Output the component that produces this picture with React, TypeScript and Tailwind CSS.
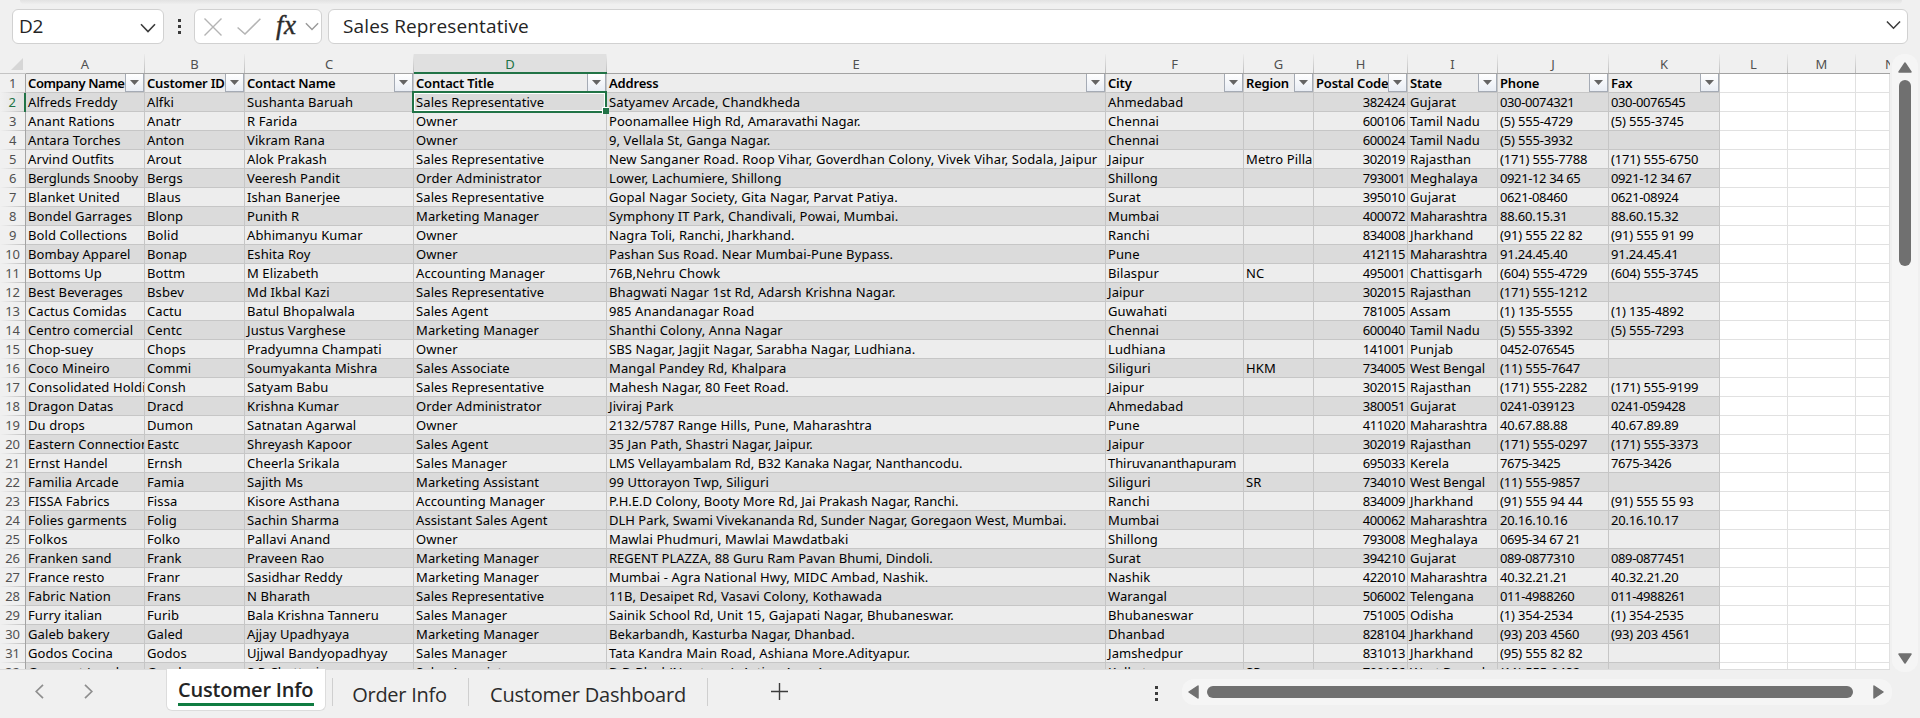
import React from "react";
import clsx from "clsx";

type Col = { letter: string; width: string; title?: string };

const COLS: Col[] = [
  { letter: "A", width: "w-[119px]", title: "Company Name" },
  { letter: "B", width: "w-[100px]", title: "Customer ID" },
  { letter: "C", width: "w-[169px]", title: "Contact Name" },
  { letter: "D", width: "w-[193px]", title: "Contact Title" },
  { letter: "E", width: "w-[499px]", title: "Address" },
  { letter: "F", width: "w-[138px]", title: "City" },
  { letter: "G", width: "w-[70px]", title: "Region" },
  { letter: "H", width: "w-[94px]", title: "Postal Code" },
  { letter: "I", width: "w-[90px]", title: "State" },
  { letter: "J", width: "w-[111px]", title: "Phone" },
  { letter: "K", width: "w-[111px]", title: "Fax" },
  { letter: "L", width: "w-[68px]" },
  { letter: "M", width: "w-[68px]" },
  { letter: "N", width: "w-[34px]" },
];

const ROWS: string[] = [
  "Alfreds Freddy|Alfki|Sushanta Baruah|Sales Representative|Satyamev Arcade, Chandkheda|Ahmedabad||382424|Gujarat|030-0074321|030-0076545",
  "Anant Rations|Anatr|R Farida|Owner|Poonamallee High Rd, Amaravathi Nagar.|Chennai||600106|Tamil Nadu|(5) 555-4729|(5) 555-3745",
  "Antara Torches|Anton|Vikram Rana|Owner|9, Vellala St, Ganga Nagar.|Chennai||600024|Tamil Nadu|(5) 555-3932|",
  "Arvind Outfits|Arout|Alok Prakash|Sales Representative|New Sanganer Road. Roop Vihar, Goverdhan Colony, Vivek Vihar, Sodala, Jaipur|Jaipur|Metro Pillar|302019|Rajasthan|(171) 555-7788|(171) 555-6750",
  "Berglunds Snooby|Bergs|Veeresh Pandit|Order Administrator|Lower, Lachumiere, Shillong|Shillong||793001|Meghalaya|0921-12 34 65|0921-12 34 67",
  "Blanket United|Blaus|Ishan Banerjee|Sales Representative|Gopal Nagar Society, Gita Nagar, Parvat Patiya.|Surat||395010|Gujarat|0621-08460|0621-08924",
  "Bondel Garrages|Blonp|Punith R|Marketing Manager|Symphony IT Park, Chandivali, Powai, Mumbai.|Mumbai||400072|Maharashtra|88.60.15.31|88.60.15.32",
  "Bold Collections|Bolid|Abhimanyu Kumar|Owner|Nagra Toli, Ranchi, Jharkhand.|Ranchi||834008|Jharkhand|(91) 555 22 82|(91) 555 91 99",
  "Bombay Apparel|Bonap|Eshita Roy|Owner|Pashan Sus Road. Near Mumbai-Pune Bypass.|Pune||412115|Maharashtra|91.24.45.40|91.24.45.41",
  "Bottoms Up|Bottm|M Elizabeth|Accounting Manager|76B,Nehru Chowk|Bilaspur|NC|495001|Chattisgarh|(604) 555-4729|(604) 555-3745",
  "Best Beverages|Bsbev|Md Ikbal Kazi|Sales Representative|Bhagwati Nagar 1st Rd, Adarsh Krishna Nagar.|Jaipur||302015|Rajasthan|(171) 555-1212|",
  "Cactus Comidas|Cactu|Batul Bhopalwala|Sales Agent|985 Anandanagar Road|Guwahati||781005|Assam|(1) 135-5555|(1) 135-4892",
  "Centro comercial|Centc|Justus Varghese|Marketing Manager|Shanthi Colony, Anna Nagar|Chennai||600040|Tamil Nadu|(5) 555-3392|(5) 555-7293",
  "Chop-suey|Chops|Pradyumna Champati|Owner|SBS Nagar, Jagjit Nagar, Sarabha Nagar, Ludhiana.|Ludhiana||141001|Punjab|0452-076545|",
  "Coco Mineiro|Commi|Soumyakanta Mishra|Sales Associate|Mangal Pandey Rd, Khalpara|Siliguri|HKM|734005|West Bengal|(11) 555-7647|",
  "Consolidated Holdings|Consh|Satyam Babu|Sales Representative|Mahesh Nagar, 80 Feet Road.|Jaipur||302015|Rajasthan|(171) 555-2282|(171) 555-9199",
  "Dragon Datas|Dracd|Krishna Kumar|Order Administrator|Jiviraj Park|Ahmedabad||380051|Gujarat|0241-039123|0241-059428",
  "Du drops|Dumon|Satnatan Agarwal|Owner|2132/5787 Range Hills, Pune, Maharashtra|Pune||411020|Maharashtra|40.67.88.88|40.67.89.89",
  "Eastern Connection|Eastc|Shreyash Kapoor|Sales Agent|35 Jan Path, Shastri Nagar, Jaipur.|Jaipur||302019|Rajasthan|(171) 555-0297|(171) 555-3373",
  "Ernst Handel|Ernsh|Cheerla Srikala|Sales Manager|LMS Vellayambalam Rd, B32 Kanaka Nagar, Nanthancodu.|Thiruvananthapuram||695033|Kerela|7675-3425|7675-3426",
  "Familia Arcade|Famia|Sajith Ms|Marketing Assistant|99 Uttorayon Twp, Siliguri|Siliguri|SR|734010|West Bengal|(11) 555-9857|",
  "FISSA Fabrics|Fissa|Kisore Asthana|Accounting Manager|P.H.E.D Colony, Booty More Rd, Jai Prakash Nagar, Ranchi.|Ranchi||834009|Jharkhand|(91) 555 94 44|(91) 555 55 93",
  "Folies garments|Folig|Sachin Sharma|Assistant Sales Agent|DLH Park, Swami Vivekananda Rd, Sunder Nagar, Goregaon West, Mumbai.|Mumbai||400062|Maharashtra|20.16.10.16|20.16.10.17",
  "Folkos|Folko|Pallavi Anand|Owner|Mawlai Phudmuri, Mawlai Mawdatbaki|Shillong||793008|Meghalaya|0695-34 67 21|",
  "Franken sand|Frank|Praveen Rao|Marketing Manager|REGENT PLAZZA, 88 Guru Ram Pavan Bhumi, Dindoli.|Surat||394210|Gujarat|089-0877310|089-0877451",
  "France resto|Franr|Sasidhar Reddy|Marketing Manager|Mumbai - Agra National Hwy, MIDC Ambad, Nashik.|Nashik||422010|Maharashtra|40.32.21.21|40.32.21.20",
  "Fabric Nation|Frans|N Bharath|Sales Representative|11B, Desaipet Rd, Vasavi Colony, Kothawada|Warangal||506002|Telengana|011-4988260|011-4988261",
  "Furry italian|Furib|Bala Krishna Tanneru|Sales Manager|Sainik School Rd, Unit 15, Gajapati Nagar, Bhubaneswar.|Bhubaneswar||751005|Odisha|(1) 354-2534|(1) 354-2535",
  "Galeb bakery|Galed|Ajjay Upadhyaya|Marketing Manager|Bekarbandh, Kasturba Nagar, Dhanbad.|Dhanbad||828104|Jharkhand|(93) 203 4560|(93) 203 4561",
  "Godos Cocina|Godos|Ujjwal Bandyopadhyay|Sales Manager|Tata Kandra Main Road, Ashiana More.Adityapur.|Jamshedpur||831013|Jharkhand|(95) 555 82 82|",
  "Gourmet Lanchonetes|Gourl|S R Chatterjee|Sales Associate|D D Block(Newtown), Action Area 1|Kolkata|SP|700156|West Bengal|(11) 555-9482|",
];

function tracking(text: string) {
  if (/^\(/.test(text)) return "tracking-[-0.17px]";
  if (/^[\d.]+$/.test(text) && text.includes(".")) return "tracking-[-0.22px]";
  if (/^[\d\- ]+$/.test(text)) return "tracking-[-0.38px]";
  if (/Vihar/.test(text)) return "tracking-[0.15px]";
  if (/LMS|DLH|REGENT|Poonam|^P\.H/.test(text)) return "tracking-[0.01px]";
  if (/^(Thiru|Mahara|West|Berglunds)/.test(text)) return "tracking-[-0.08px]";
  return "tracking-[0.1px]";
}

function Chevron({ className }: { className: string }) {
  return (
    <svg viewBox="0 0 16 10" className={className} fill="none" stroke="currentColor" strokeWidth="1.6">
      <path d="M1 1.2 8 8.5 15 1.2" />
    </svg>
  );
}

function Kebab() {
  return (
    <div className="flex w-[3px] flex-col gap-[3px]">
      <i className="size-[3px] bg-[#3b3b3b]" />
      <i className="size-[3px] bg-[#3b3b3b]" />
      <i className="size-[3px] bg-[#3b3b3b]" />
    </div>
  );
}

function FormulaBar() {
  const box = "h-[35px] shrink-0 rounded-md border border-[#d1d1d1] bg-white flex items-center";
  return (
    <header className="h-[54px] shrink-0">
      <div className="ml-5 h-1 w-[1882px] rounded-b-lg bg-gradient-to-b from-[#e2e2e2] to-[#eeeeee]" />
      <div className="mt-[5px] flex pl-3 font-['Open_Sans','Noto_Sans',sans-serif] text-[19px] text-[#242424]">
        <div className={clsx(box, "w-[152px] justify-between pr-[7px] pl-[6px]")}>
          <span className="tracking-[-0.2px]">D2</span>
          <Chevron className="mt-0.5 h-[10px] w-4 text-[#3b3b3b]" />
        </div>
        <div className="flex w-[30px] items-center justify-center">
          <Kebab />
        </div>
        <div className={clsx(box, "w-[128px] pl-[9px]")}>
          <svg viewBox="0 0 18 18" className="size-[18px]" stroke="#b4b4b4" strokeWidth="1.4" fill="none">
            <path d="M.5.5 17.5 17.5M17.5.5.5 17.5" />
          </svg>
          <svg viewBox="0 0 24 17" className="ml-[15px] h-[17px] w-6" stroke="#b4b4b4" strokeWidth="1.5" fill="none">
            <path d="M.6 9.5 8 16 23.4.8" />
          </svg>
          <span className="ml-[15px] w-[22px] pb-1 font-['Liberation_Serif',serif] text-[27px] leading-[28px] tracking-[0.5px] text-[#2b2b2b] italic [-webkit-text-stroke:0.4px_#2b2b2b]">
            fx
          </span>
          <Chevron className="ml-[7px] h-[9px] w-[14px] text-[#9a9a9a]" />
        </div>
        <div className={clsx(box, "ml-[6px] w-[1580px] justify-between pr-[6px] pl-[14px]")}>
          <span className="tracking-[0.13px]">Sales Representative</span>
          <Chevron className="mb-1 h-[10px] w-[15px] text-[#3b3b3b]" />
        </div>
      </div>
    </header>
  );
}

function ColumnHeader() {
  return (
    <div className="flex h-5 shrink-0">
      <div className="flex w-[26px] justify-end border-b border-[#c4c4c4] pt-[4px] pr-[3px]">
        <svg viewBox="0 0 12 12" className="size-3">
          <path d="M12 0V12H0Z" fill="#d6d6d6" />
        </svg>
      </div>
      {COLS.map((c) => {
        const sel = c.letter === "D";
        return (
          <div
            key={c.letter}
            className={clsx(
              c.width,
              "flex shrink-0 overflow-hidden",
              sel ? "border-b-2 border-[#217346] bg-[#e0e0e0] text-[#217346]" : "border-b border-[#a3a3a3] text-[#505050]",
            )}
          >
            <span className={clsx("flex-1 pt-px leading-[19px]", c.letter === "N" ? "pl-[29px]" : "text-center")}>{c.letter}</span>
            {c.letter !== "N" && <i className="w-px bg-gradient-to-b from-[#ececec] to-[#bdbdbd]" />}
          </div>
        );
      })}
    </div>
  );
}

function RowNumber({ n }: { n: number }) {
  const sel = n === 2;
  return (
    <div
      className={clsx(
        "flex w-[26px] shrink-0 flex-col",
        sel ? "border-r-2 border-[#217346] text-[#217346]" : "border-r border-[#a3a3a3] text-[#505050]",
      )}
    >
      <span className={clsx("h-[18px] text-center leading-[18px] tracking-[-0.3px]", sel && "bg-gradient-to-r from-[#f0f0f0] to-[#e2e2e2]")}>
        {n}
      </span>
      <i className="h-px bg-gradient-to-r from-[#f0f0f0] to-[#c0c0c0]" />
    </div>
  );
}

function FilterButton() {
  return (
    <span className="flex h-[18px] w-[19px] shrink-0 items-center justify-center border-r border-b border-l border-[#a5abb5] bg-gradient-to-b from-white to-[#e9edf4]">
      <svg viewBox="0 0 9 5" className="h-[5px] w-[9px]">
        <path d="M0 0H9L4.5 5Z" fill="#646464" />
      </svg>
    </span>
  );
}

function HeaderRow() {
  return (
    <div className="flex h-[19px] shrink-0">
      <RowNumber n={1} />
      {COLS.map((c) => (
        <div
          key={c.letter}
          className={clsx(
            c.width,
            "flex shrink-0 border-r border-b",
            c.title ? "border-[#c6c6c6] bg-[#ededed]" : "border-[#e1e1e1] bg-white",
          )}
        >
          {c.title && (
            <>
              <span
                className={clsx(
                  "min-w-0 flex-1 overflow-hidden pl-0.5 leading-[18px] font-semibold whitespace-nowrap",
                  c.letter === "A" ? "tracking-[-0.4px]" : "tracking-[-0.19px]",
                )}
              >
                {c.title}
              </span>
              <FilterButton />
            </>
          )}
        </div>
      ))}
    </div>
  );
}

function DataRow({ row, n }: { row: string; n: number }) {
  const cells = row.split("|");
  return (
    <div className="flex h-[19px] shrink-0">
      <RowNumber n={n} />
      {COLS.map((c, i) => {
        const text = cells[i] ?? "";
        const selected = n === 2 && c.letter === "D";
        return (
          <div
            key={c.letter}
            className={clsx(
              c.width,
              "shrink-0 border-r border-b pl-0.5 leading-[18px] whitespace-nowrap",
              c.title ? "border-[#c6c6c6]" : "border-[#e1e1e1] bg-white",
              c.title && (n % 2 === 0 ? "bg-[#dbdbdb]" : "bg-[#ededed]"),
              c.letter === "H" && "pr-0.5 text-right",
              selected ? "relative z-10" : "overflow-hidden",
              tracking(text),
            )}
          >
            {text}
            {selected && (
              <span className="absolute -top-[2px] -left-[2px] h-[22px] w-[195px] border-2 border-[#217346] outline-1 -outline-offset-3 outline-white">
                <i className="absolute -right-[4px] -bottom-[3px] size-[7px] border-t border-l border-white bg-[#217346]" />
              </span>
            )}
          </div>
        );
      })}
    </div>
  );
}

function VerticalScrollbar() {
  return (
    <div className="ml-[2px] flex h-[618px] w-[26px] flex-col items-center rounded-xl bg-[#f5f5f5] pt-2">
      <svg viewBox="0 0 14 11" className="h-[11px] w-[14px]">
        <path d="M7 1 13 10H1Z" fill="#707070" stroke="#707070" strokeLinejoin="round" strokeWidth="1.5" />
      </svg>
      <div className="mt-[7px] h-[186px] w-3 rounded-full bg-[#707070]" />
      <svg viewBox="0 0 14 11" className="mt-auto mb-[8px] h-[11px] w-[14px]">
        <path d="M7 10 1 1H13Z" fill="#707070" stroke="#707070" strokeLinejoin="round" strokeWidth="1.5" />
      </svg>
    </div>
  );
}

function TabBar() {
  const divider = "mt-[9px] h-7 w-px shrink-0 bg-[#cfcfcf]";
  return (
    <footer className="flex h-[49px] shrink-0 font-['Open_Sans','Noto_Sans',sans-serif] text-[20px] text-[#2b2b2b]">
      <div className="flex w-[166px] gap-[40px] pt-[15px] pl-[35px]">
        <svg viewBox="0 0 9 15" className="h-[15px] w-[9px]" fill="none" stroke="#8f8f8f" strokeWidth="1.7">
          <path d="M8 .8 1.2 7.5 8 14.2" />
        </svg>
        <svg viewBox="0 0 9 15" className="h-[15px] w-[9px]" fill="none" stroke="#8f8f8f" strokeWidth="1.7">
          <path d="M1 .8 7.8 7.5 1 14.2" />
        </svg>
      </div>
      <div className="flex h-[42px] w-[160px] justify-center rounded-b-md border-r border-b border-l border-[#dcdcdc] bg-white">
        <div className="h-[37px] w-[136px] border-b-3 border-[#107c41] pr-px text-center leading-[41px] font-semibold tracking-[-0.2px] whitespace-nowrap text-[#242424]">
          Customer Info
        </div>
      </div>
      <div className={clsx(divider, "ml-[6px]")} />
      <div className="w-[135px] pt-[9px] pr-[2px] text-center leading-[34px] tracking-[-0.25px]">Order Info</div>
      <div className={divider} />
      <div className="w-[238px] pt-[9px] text-center leading-[34px] tracking-[-0.22px]">Customer Dashboard</div>
      <div className={divider} />
      <svg viewBox="0 0 17 17" className="mt-[14px] ml-[63px] size-[17px]" stroke="#3b3b3b" strokeWidth="1.4">
        <path d="M8.5 0V17M0 8.5H17" />
      </svg>
      <div className="mt-[17px] ml-auto">
        <Kebab />
      </div>
      <div className="mt-[10px] mr-[28px] ml-[24px] flex h-[26px] w-[710px] items-center rounded-xl bg-[#f5f5f5] pr-[8px] pl-[6px]">
        <svg viewBox="0 0 11 14" className="h-[14px] w-[11px]">
          <path d="M1 7 10 1V13Z" fill="#707070" stroke="#707070" strokeLinejoin="round" strokeWidth="1.5" />
        </svg>
        <div className="ml-[8px] h-3 w-[646px] rounded-full bg-[#707070]" />
        <svg viewBox="0 0 11 14" className="ml-auto h-[14px] w-[11px]">
          <path d="M10 7 1 1V13Z" fill="#707070" stroke="#707070" strokeLinejoin="round" strokeWidth="1.5" />
        </svg>
      </div>
    </footer>
  );
}

export default function App() {
  return (
    <div className="flex h-[718px] w-[1920px] flex-col overflow-hidden bg-[#f0f0f0] font-['Noto_Sans',sans-serif] text-[13px] text-black">
      <FormulaBar />
      <div className="flex h-[615px] shrink-0">
        <div className="flex h-[616px] w-[1890px] flex-col overflow-hidden border-b border-[#dcdcdc]">
          <ColumnHeader />
          <HeaderRow />
          {ROWS.map((r, i) => (
            <DataRow key={i} row={r} n={i + 2} />
          ))}
        </div>
        <VerticalScrollbar />
      </div>
      <TabBar />
    </div>
  );
}
